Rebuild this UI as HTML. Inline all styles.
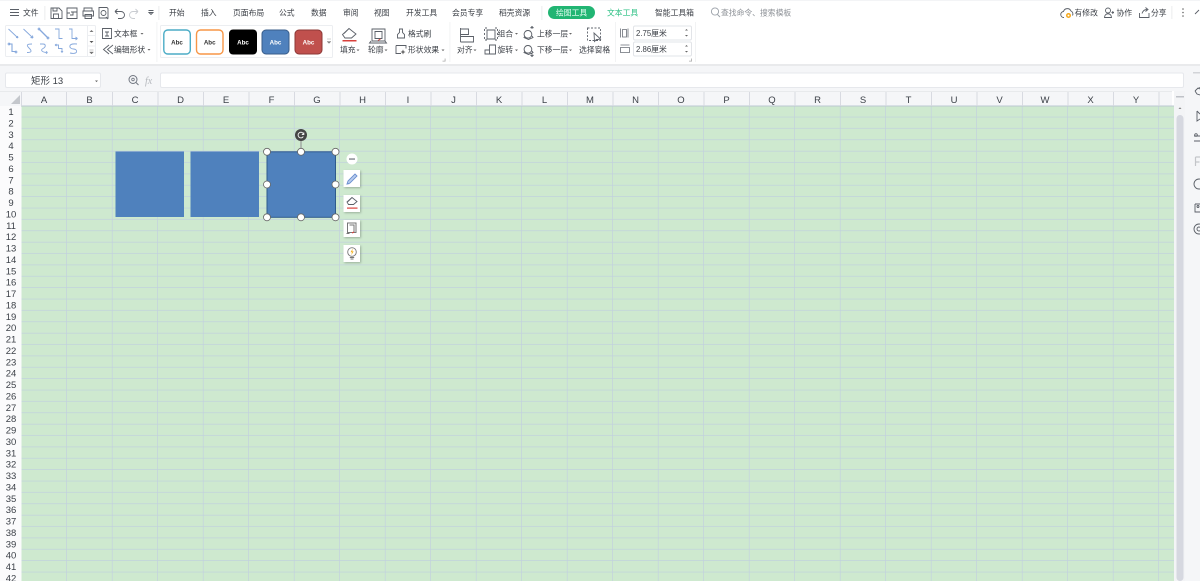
<!DOCTYPE html>
<html lang="zh">
<head>
<meta charset="utf-8">
<title>WPS</title>
<style>
html,body{margin:0;padding:0;width:1200px;height:581px;overflow:hidden;background:#fff}
svg{display:block;filter:blur(.3px)}
text{font-family:"Liberation Sans","Noto Sans CJK SC",sans-serif}
.t{font-size:7.8px;fill:#3c4047}
.c{font-size:9.5px;fill:#3c4148;text-anchor:middle}
.r{font-size:9.5px;fill:#3c4148;text-anchor:middle}
.i{fill:none;stroke:#5a5f67;stroke-width:.9}
.b{fill:none;stroke:#86a8dc;stroke-width:.9}
.a{font-size:6.2px;fill:#333;text-anchor:middle;font-weight:bold}
.d{fill:#666}
</style>
</head>
<body>
<svg width="1200" height="581" viewBox="0 0 1200 581" xmlns="http://www.w3.org/2000/svg">
<defs>
<pattern id="g" x="21.5" y="106" width="45.5" height="11.375" patternUnits="userSpaceOnUse">
<rect width="45.5" height="11.375" fill="#cee9cf"/>
<rect y="10.7" width="45.5" height=".9" fill="#c0d0de"/>
<rect x="44.9" width=".9" height="11.375" fill="#c2cee0"/>
</pattern>
<filter id="s" x="-30%" y="-30%" width="160%" height="160%"><feDropShadow dx="1" dy="1" stdDeviation="1" flood-color="#000" flood-opacity=".25"/></filter>
</defs>

<!-- ribbon -->
<rect width="1200" height="65" fill="#fff"/>
<rect y="65" width="1200" height="26" fill="#f5f6f8"/>
<rect y="64" width="1200" height="2" fill="#e9eaec"/>
<rect x="0" y="0" width="1200" height="1" fill="#f3f4f6"/>

<!-- top row -->
<path d="M10 9.500h9M10 12.500h9M10 15.500h9" class="i"/>
<text x="23" y="15.500" class="t">文件</text>
<rect x="44.500" y="6" width=".8" height="14" fill="#e6e7ea"/>
<path d="M51 8h8l3 3v7.500h-11zM53.500 18v-4h5v4M53 8v3h4V8" class="i"/>
<path d="M67 8h10v10.500H67zM71 12h6M70 15h3v-3M67 13h3" class="i"/>
<path d="M84 11V8h8v3M83 11h10.500v5H83zM85 14.500h6.500v4H85z" class="i"/>
<path d="M99 7.500h8l1 1v9.500h-9zM106 17l2 2" class="i"/><circle cx="103.500" cy="13" r="2.500" class="i"/>
<path d="M115 11.500h6a3.500 3.500 0 0 1 0 7h-3M115 11.500l2.500-2.500M115 11.500l2.500 2.500" class="i"/>
<path d="M138 11.500h-5a3.500 3.500 0 0 0 0 7h2M138 11.500l-2.500-2.500M138 11.500l-2.500 2.500" fill="none" stroke="#c9ccd1" stroke-width=".9"/>
<path d="M148.500 10.500h5M149 12.500l2 2 2-2z" class="i"/>
<rect x="158.500" y="6" width=".8" height="14" fill="#e6e7ea"/>
<text x="169" y="15.500" class="t">开始</text>
<text x="201" y="15.500" class="t">插入</text>
<text x="233" y="15.500" class="t">页面布局</text>
<text x="279" y="15.500" class="t">公式</text>
<text x="311" y="15.500" class="t">数据</text>
<text x="343" y="15.500" class="t">审阅</text>
<text x="374" y="15.500" class="t">视图</text>
<text x="406" y="15.500" class="t">开发工具</text>
<text x="452" y="15.500" class="t">会员专享</text>
<text x="499" y="15.500" class="t">稻壳资源</text>
<rect x="541.500" y="6" width=".8" height="14" fill="#e6e7ea"/>
<rect x="548" y="6" width="47" height="13" rx="6.500" fill="#21b573"/>
<text x="556" y="15.500" class="t" style="fill:#e8fff4">绘图工具</text>
<text x="607" y="15.500" class="t" style="fill:#2cc084">文本工具</text>
<text x="655" y="15.500" class="t">智能工具箱</text>
<circle cx="715" cy="11.500" r="3.600" fill="none" stroke="#9aa0a8" stroke-width=".9"/><path d="M717.500 14.500l2.500 2.500" stroke="#9aa0a8" stroke-width=".9"/>
<text x="721" y="15.500" class="t" style="fill:#8c9096">查找命令、搜索模板</text>

<!-- right of top row -->
<path d="M1064 17.500a3 3 0 0 1-.5-6 4 4 0 0 1 7.500-.5 3.200 3.200 0 0 1 1.500 4.500" class="i"/>
<circle cx="1068.500" cy="15.500" r="2.500" fill="#f4a81c"/><circle cx="1068.500" cy="15.500" r="1" fill="#fff"/>
<text x="1074.500" y="15.500" class="t">有修改</text>
<circle cx="1108" cy="10.500" r="2.500" class="i"/><path d="M1104.500 17.500c0-5 7-5 7 0zM1111.500 12.500h2.500M1112.800 11v3" class="i"/>
<text x="1116.500" y="15.500" class="t">协作</text>
<path d="M1139.500 13v4.500h9.500V13M1142 13.500c1-3 3-4 5-4M1145.500 7.500l2.500 2-2.500 2" class="i"/>
<text x="1151" y="15.500" class="t">分享</text>
<rect x="1171.500" y="6" width=".8" height="13" fill="#e6e7ea"/>
<circle cx="1183" cy="9" r=".8" class="d"/><circle cx="1183" cy="12.500" r=".8" class="d"/><circle cx="1183" cy="16" r=".8" class="d"/>
<path d="M1195 14l4-4" class="i"/>

<!-- line shapes gallery -->
<rect x="5.500" y="25.500" width="90" height="31" rx="1" fill="#fff" stroke="#eceef1"/>
<g class="b">
<path d="M8.500 29l9.500 9M18 38l-2-.5M18 38l-.5-2"/>
<path d="M23.500 29l9.500 9M33 38l-2.500-.5M33 38l-.5-2.500"/>
<path d="M39 29l9 9" stroke-width="1.300"/><circle cx="39" cy="29" r=".9"/><circle cx="48" cy="38" r=".9"/>
<path d="M55 29h4v9.500h3.500"/>
<path d="M69 29h3v9.500h5.500M77.500 38.500l-2-1.500M77.500 38.500l-2 1.500"/>
<path d="M9 44h3v7.500h4" stroke-width="1.100"/><circle cx="9" cy="44" r=".9"/><circle cx="16" cy="52" r=".9"/>
<path d="M32 44c-5 0-6 1-3 4s3 4.500-2 4.500"/>
<path d="M40 44h3c3 0 3 3 0 4.500s-1 4 4.500 4M47.500 52.500l-1.500-1.200M47.500 52.500l-1.500 1.200"/>
<path d="M55 45h3.500v3.500H62v4M62 52.500l-1-1.200M62 52.500l1-1.200M55 45l1.500-1M55 45l1.500 1"/>
<path d="M77 44c-10-1-8 5-3.500 5s5 6-3.500 4"/>
</g>
<path d="M87.500 25.500v31M87.500 35.500h8M87.500 46h8" stroke="#eceef1" fill="none"/>
<path d="M89.500 32l2-2 2 2z" fill="#777"/><path d="M89.500 41l2 2 2-2z" fill="#555"/><path d="M89.500 50h4M89.500 52l2 2 2-2z" fill="#777" stroke="#777" stroke-width=".4"/>

<!-- text box / edit shape -->
<path d="M102.500 28.500h9v10h-9zM105 32h4M107 32v4M105 36h4" class="i"/>
<text x="114" y="36.500" class="t">文本框</text><path d="M140.500 33h3l-1.500 1.600z" class="d"/>
<path d="M109 45l-5.500 4.500 5.500 4.500M113 45l-5.500 4.500 5.500 4.500" class="i"/>
<text x="114" y="52.500" class="t">编辑形状</text><path d="M147.500 49h3l-1.500 1.600z" class="d"/>
<rect x="156.500" y="22" width=".8" height="40" fill="#eff0f2"/>

<!-- style gallery -->
<rect x="160.500" y="25.500" width="172" height="32" rx="1" fill="#fff" stroke="#eceef1"/>
<rect x="163.800" y="30" width="26.500" height="24" rx="4" fill="#fff" stroke="#4bacc6" stroke-width="1.400"/>
<text x="177" y="44.500" class="a">Abc</text>
<rect x="196.500" y="30" width="26.500" height="24" rx="4" fill="#fff" stroke="#f79646" stroke-width="1.400"/>
<text x="209.700" y="44.500" class="a">Abc</text>
<rect x="229" y="29.500" width="28" height="25" rx="4" fill="#000"/>
<text x="243" y="44.500" class="a" style="fill:#fff">Abc</text>
<rect x="262" y="30" width="27" height="24" rx="4" fill="#4f81bd" stroke="#385d8a"/>
<text x="275.500" y="44.500" class="a" style="fill:#fff">Abc</text>
<rect x="295" y="30" width="27" height="24" rx="4" fill="#c0504d" stroke="#8c3836"/>
<text x="308.500" y="44.500" class="a" style="fill:#fff">Abc</text>
<path d="M327 39h4M327 41.500l2 2 2-2z" fill="#888" stroke="#888" stroke-width=".4"/>

<!-- fill / outline -->
<path d="M349 28.500l7 5.500-4.500 4h-6.500l-2.500-3.500zM344 33.500l5-5" class="i"/>
<rect x="342.500" y="40" width="14" height="1.500" fill="#d8413c"/>
<text x="340" y="52.500" class="t">填充</text><path d="M356.500 49.500h3l-1.500 1.600z" class="d"/>
<path d="M372 29h13v12h-13zM375 31.500h7v7h-7zM371 41l-1.500 2h17l-1.500-2" class="i"/>
<path d="M378 40.500l2.500-1.500" stroke="#d8413c" stroke-width="1"/>
<text x="368" y="52.500" class="t">轮廓</text><path d="M384.500 49.500h3l-1.500 1.600z" class="d"/>
<path d="M399.500 29h3v3.500l2 2v3.500h-7v-3.500l2-2z" class="i"/>
<text x="408" y="36.500" class="t">格式刷</text>
<path d="M396 45.500h10v3M396 45.500v8h5" class="i"/><path d="M403 49.500l.8 1.700 1.700.8-1.700.8-.8 1.700-.8-1.700-1.700-.8 1.700-.8z" fill="#666"/>
<text x="408" y="52.500" class="t">形状效果</text><path d="M441.500 49.500h3l-1.500 1.600z" class="d"/>
<path d="M445.500 61.500h-3v-.8h2.200V58.500h.8z" fill="#aaa"/>
<rect x="449.500" y="22" width=".8" height="40" fill="#eff0f2"/>

<!-- align etc -->
<path d="M460.500 28v14M460.500 29h8v5.500h-8M460.500 36.500h13v5.500h-13" class="i"/>
<text x="457" y="52.500" class="t">对齐</text><path d="M473.500 49.500h3l-1.500 1.600z" class="d"/>
<path d="M487 30h8v9h-8z" class="i"/><path d="M484.500 29v2M484.500 33v2M484.500 37v2M497.500 29v2M497.500 33v2M497.500 37v2M485 28h2M495 28h2M485 40h2M495 40h2" class="i"/>
<text x="497.500" y="36.500" class="t">组合</text><path d="M515 33h3l-1.500 1.600z" class="d"/>
<path d="M485 50v4h10.500v-9h-6v5h-4.500zM489.500 50v4" class="i"/>
<text x="497.500" y="52.500" class="t">旋转</text><path d="M515 49.500h3l-1.500 1.600z" class="d"/>
<path d="M528 30.500a3.800 3.800 0 1 1-.1 0zM525 36l-1 1.500 4.500 2 4.500-2-1-1.500M532 29v-2.500M530.500 28l1.500-1.500 1.500 1.500" class="i"/>
<text x="537" y="36.500" class="t">上移一层</text><path d="M569 33h3l-1.500 1.600z" class="d"/>
<path d="M528 45.500a3.800 3.800 0 1 1-.1 0zM525 51l-1 1.500 4.500 2 4.500-2-1-1.500M532 53v3M530.500 55l1.500 1.500 1.500-1.500" class="i"/>
<text x="537" y="52.500" class="t">下移一层</text><path d="M569 49.500h3l-1.500 1.600z" class="d"/>
<path d="M587.500 28h13v12.500h-13z" fill="none" stroke="#5f646c" stroke-width=".9" stroke-dasharray="2 1.500"/>
<path d="M594 33l.5 8.500 2-2 1.500 0 2.500-.5z" fill="#fff" stroke="#5f646c" stroke-width=".9"/>
<text x="579" y="52.500" class="t">选择窗格</text>
<rect x="615" y="22" width=".8" height="40" fill="#eff0f2"/>

<!-- size -->
<path d="M620.500 28.500v9M628 28.500v9M622.500 29.500h4v7.500h-4z" fill="none" stroke="#6a6f77" stroke-width=".8"/>
<path d="M620.500 45h9M620.500 47.500h9v5h-9z" fill="none" stroke="#6a6f77" stroke-width=".8"/>
<rect x="633.500" y="26" width="58" height="14" rx="1.500" fill="#fff" stroke="#e2e4e8"/>
<rect x="633.500" y="42" width="58" height="14" rx="1.500" fill="#fff" stroke="#e2e4e8"/>
<text x="636" y="36" class="t">2.75厘米</text>
<text x="636" y="52" class="t">2.86厘米</text>
<path d="M685 30.500l1.500-1.500 1.500 1.500zM685 35l1.500 1.500 1.500-1.500zM685 46.500l1.500-1.500 1.500 1.500zM685 51l1.500 1.500 1.500-1.500z" fill="#666"/>
<path d="M692 61.500h-3v-.8h2.200V58.500h.8z" fill="#aaa"/>
<rect x="695" y="22" width=".8" height="40" fill="#eff0f2"/>

<!-- formula bar -->
<rect x="5.500" y="73" width="95" height="14.500" rx="1.500" fill="#fff" stroke="#e6e8ec"/>
<text x="31" y="84" style="font-size:9.5px;fill:#3c4148">矩形 13</text>
<path d="M95 80.500h3l-1.500 1.600z" class="d"/>
<circle cx="133" cy="79.500" r="4" fill="none" stroke="#707680" stroke-width="1"/><circle cx="133" cy="79.500" r="1.300" fill="none" stroke="#707680" stroke-width=".8"/><path d="M136 82.500l2.500 2.500" stroke="#707680" stroke-width="1"/>
<text x="145" y="84" style="font-size:10px;font-style:italic;fill:#b5b8bd;font-family:'Liberation Serif',serif">fx</text>
<rect x="160.500" y="73" width="1023" height="14.500" rx="1.500" fill="#fff" stroke="#e6e8ec"/>

<!-- sheet -->
<rect x="0" y="91" width="1172" height="15" fill="#f5f6f8"/>
<rect x="0" y="91" width="1172" height=".8" fill="#e4e6ea"/>
<rect x="0" y="106" width="21.500" height="475" fill="#fbfbfc"/>
<rect x="21.500" y="106" width="1152.500" height="475" fill="url(#g)"/>
<rect x="21" y="105.500" width="1153" height="1" fill="#bcc8d2"/>
<path d="M20 95v9h-9z" fill="#c4c7cc"/>
<path d="M21.500 92v14M66.500 92v14M112.500 92v14M158 92v14M203.500 92v14M249 92v14M294.500 92v14M340 92v14M385.500 92v14M431 92v14M476.500 92v14M522 92v14M567.500 92v14M613 92v14M658.500 92v14M704 92v14M749.500 92v14M795 92v14M840.500 92v14M886 92v14M931.500 92v14M977 92v14M1022.500 92v14M1068 92v14M1113.500 92v14M1159 92v14" stroke="#d5d8de" stroke-width=".9"/>
<g>
<text x="44" y="103" class="c">A</text><text x="89.500" y="103" class="c">B</text><text x="135" y="103" class="c">C</text><text x="180.500" y="103" class="c">D</text><text x="226" y="103" class="c">E</text><text x="271.500" y="103" class="c">F</text><text x="317" y="103" class="c">G</text><text x="362.500" y="103" class="c">H</text><text x="408" y="103" class="c">I</text><text x="453.500" y="103" class="c">J</text><text x="499" y="103" class="c">K</text><text x="544.500" y="103" class="c">L</text><text x="590" y="103" class="c">M</text><text x="635.500" y="103" class="c">N</text><text x="681" y="103" class="c">O</text><text x="726.500" y="103" class="c">P</text><text x="772" y="103" class="c">Q</text><text x="817.500" y="103" class="c">R</text><text x="863" y="103" class="c">S</text><text x="908.500" y="103" class="c">T</text><text x="954" y="103" class="c">U</text><text x="999.500" y="103" class="c">V</text><text x="1045" y="103" class="c">W</text><text x="1090.500" y="103" class="c">X</text><text x="1136" y="103" class="c">Y</text>
</g>
<g>
<text x="11" y="115" class="r">1</text><text x="11" y="126.400" class="r">2</text><text x="11" y="137.800" class="r">3</text><text x="11" y="149.100" class="r">4</text><text x="11" y="160.500" class="r">5</text><text x="11" y="171.900" class="r">6</text><text x="11" y="183.300" class="r">7</text><text x="11" y="194.600" class="r">8</text><text x="11" y="206" class="r">9</text><text x="11" y="217.400" class="r">10</text><text x="11" y="228.800" class="r">11</text><text x="11" y="240.100" class="r">12</text><text x="11" y="251.500" class="r">13</text><text x="11" y="262.900" class="r">14</text><text x="11" y="274.300" class="r">15</text><text x="11" y="285.600" class="r">16</text><text x="11" y="297" class="r">17</text><text x="11" y="308.400" class="r">18</text><text x="11" y="319.800" class="r">19</text><text x="11" y="331.100" class="r">20</text><text x="11" y="342.500" class="r">21</text><text x="11" y="353.900" class="r">22</text><text x="11" y="365.300" class="r">23</text><text x="11" y="376.600" class="r">24</text><text x="11" y="388" class="r">25</text><text x="11" y="399.400" class="r">26</text><text x="11" y="410.800" class="r">27</text><text x="11" y="422.100" class="r">28</text><text x="11" y="433.500" class="r">29</text><text x="11" y="444.900" class="r">30</text><text x="11" y="456.300" class="r">31</text><text x="11" y="467.600" class="r">32</text><text x="11" y="479" class="r">33</text><text x="11" y="490.400" class="r">34</text><text x="11" y="501.800" class="r">35</text><text x="11" y="513.100" class="r">36</text><text x="11" y="524.500" class="r">37</text><text x="11" y="535.900" class="r">38</text><text x="11" y="547.300" class="r">39</text><text x="11" y="558.600" class="r">40</text><text x="11" y="570" class="r">41</text><text x="11" y="581.400" class="r">42</text>
</g>

<!-- scrollbar & side panel -->
<rect x="1174" y="91" width="11" height="490" fill="#f3f4f6"/>
<rect x="1176" y="96" width="8" height="1.500" fill="#bfc2c8"/>
<path d="M1178.500 109l1.500-1.800 1.500 1.800z" fill="#888"/>
<rect x="1176.500" y="115" width="7" height="466" rx="3.500" fill="#d6d8e0"/>
<rect x="1185" y="66" width="15" height="515" fill="#f5f6f8"/>
<rect x="1193" y="72" width="7" height="1.500" fill="#d2d4d8"/>
<path d="M1197 89l3-1.500M1195 91l3-3 2 1M1195 91l2 3 3 1" class="i"/>
<path d="M1197 111l3 3M1197 111v10l3-2" class="i"/>
<path d="M1194 136h6M1194 141h6" class="i"/><circle cx="1196" cy="135" r="1.300" class="i"/>
<path d="M1195.500 157h4.500M1195.500 157v9M1195.500 162h4" fill="none" stroke="#c3c5c9" stroke-width="1.200"/>
<circle cx="1199" cy="184" r="5" class="i"/>
<path d="M1195 204h5M1195 204v8h5" class="i"/><circle cx="1198" cy="206.500" r="1" class="i"/>
<circle cx="1199" cy="229" r="5" class="i"/><circle cx="1199" cy="229" r="2" class="i"/>

<!-- shapes -->
<rect x="115.500" y="151.500" width="68.500" height="65.500" fill="#4f81bd"/>
<rect x="190.500" y="151.500" width="68.500" height="65.500" fill="#4f81bd"/>
<rect x="267" y="151.800" width="68.500" height="65.500" fill="#4f81bd" stroke="#2f5a8c" stroke-width="1"/>
<path d="M301 140v11.500" stroke="#9a9a9a" stroke-width="1.200"/>
<circle cx="301" cy="135" r="6" fill="#454545"/>
<path d="M303.300 136.500a2.800 2.800 0 1 1 .2-2.500M303.800 132.500v2h-2" fill="none" stroke="#eee" stroke-width="1"/>
<g fill="#fff" stroke="#666" stroke-width=".8">
<circle cx="267" cy="151.800" r="3.500"/><circle cx="301" cy="151.800" r="3.500"/><circle cx="335.500" cy="151.800" r="3.500"/>
<circle cx="267" cy="184.500" r="3.500"/><circle cx="335.500" cy="184.500" r="3.500"/>
<circle cx="267" cy="217.300" r="3.500"/><circle cx="301" cy="217.300" r="3.500"/><circle cx="335.500" cy="217.300" r="3.500"/>
</g>

<!-- float toolbar -->
<circle cx="352" cy="159" r="5.500" fill="#fff"/>
<rect x="349" y="158.300" width="6" height="1.500" fill="#8b8f95"/>
<g filter="url(#s)" fill="#fff">
<rect x="343.500" y="170" width="16.500" height="17"/>
<rect x="343.500" y="195" width="16.500" height="17"/>
<rect x="343.500" y="220" width="16.500" height="17"/>
<rect x="343.500" y="245" width="16.500" height="17"/>
</g>
<path d="M347 184l1-3 7-7 2 2-7 7zM347 184l2.500-.5" fill="#b9cdee" stroke="#6b8fd0" stroke-width=".9"/>
<path d="M352 197.500l5 4-3.500 3h-5l-1.500-2.500zM348 201.500l4-4" class="i"/>
<rect x="347" y="207.500" width="10.500" height="1.200" fill="#d8413c"/>
<path d="M347.500 223h8.500v9.500h-8.500zM349.500 225h4.500v7.500M346.500 233.500h3" fill="none" stroke="#777" stroke-width="1"/>
<path d="M352 233l2-1" stroke="#d8413c" stroke-width="1"/>
<circle cx="352" cy="252" r="4.300" fill="#fff" stroke="#777" stroke-width=".9"/>
<path d="M352.800 248.500l-2.300 3.700h1.500l-.8 3 2.500-3.800h-1.500z" fill="#f4b11f"/>
<path d="M349.800 257.500h4.400M350.500 259h3" stroke="#777" stroke-width=".9"/>
</svg>
</body>
</html>
